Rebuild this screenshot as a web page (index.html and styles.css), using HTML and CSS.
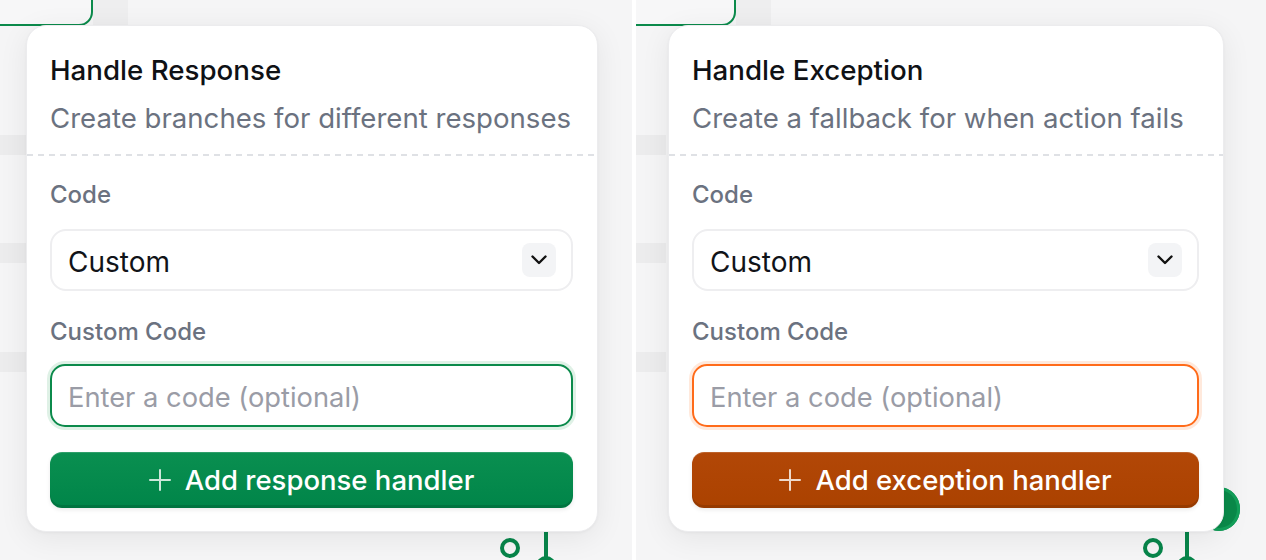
FILE: index.html
```html
<!DOCTYPE html>
<html lang="en">
<head>
<meta charset="utf-8">
<title>Handlers</title>
<link rel="stylesheet" href="styles.css">
</head>
<body>
<div class="stage">
  <section class="pane pane-left">
    <div class="band band-a"></div>
    <div class="band band-b"></div>
    <div class="band band-c"></div>
    <div class="col-shade"></div>
    <div class="node"></div>
    <svg class="connectors" width="70" height="40" viewBox="0 0 70 40">
      <circle cx="15" cy="18" r="8" fill="none" stroke="#07854a" stroke-width="4"/>
      <line x1="51" y1="0" x2="51" y2="28" stroke="#07854a" stroke-width="4"/>
      <circle cx="51" cy="36" r="8" fill="none" stroke="#07854a" stroke-width="4"/>
    </svg>
    <div class="card">
      <div class="card-head">
        <h2 class="title">Handle Response</h2>
        <p class="subtitle">Create branches for different responses</p>
      </div>
      <div class="separator"></div>
      <div class="card-body">
        <label class="label">Code</label>
        <div class="select">
          <span class="select-value">Custom</span>
          <span class="chevron">
            <svg width="16" height="10" viewBox="0 0 16 10"><polyline points="1.5,1.5 8,8 14.5,1.5" fill="none" stroke="#111" stroke-width="2.4" stroke-linecap="round" stroke-linejoin="round"/></svg>
          </span>
        </div>
        <label class="label label-gap">Custom Code</label>
        <div class="input input-green">Enter a code (optional)</div>
        <button class="btn btn-green">
          <svg class="plus" width="22" height="22" viewBox="0 0 22 22"><path d="M11 1v20M1 11h20" stroke="currentColor" stroke-width="2" stroke-linecap="round"/></svg>
          <span>Add response handler</span>
        </button>
      </div>
    </div>
  </section>
  <div class="divider"></div>
  <section class="pane pane-right">
    <div class="band band-a"></div>
    <div class="band band-b"></div>
    <div class="band band-c"></div>
    <div class="col-shade col-shade-r"></div>
    <div class="node node-r"></div>
    <div class="big-dot"></div>
    <svg class="connectors connectors-r" width="70" height="40" viewBox="0 0 70 40">
      <circle cx="15" cy="18" r="8" fill="none" stroke="#07854a" stroke-width="4"/>
      <line x1="49" y1="0" x2="49" y2="28" stroke="#07854a" stroke-width="4"/>
      <circle cx="49" cy="36" r="8" fill="none" stroke="#07854a" stroke-width="4"/>
    </svg>
    <div class="card card-r">
      <div class="card-head">
        <h2 class="title">Handle Exception</h2>
        <p class="subtitle">Create a fallback for when action fails</p>
      </div>
      <div class="separator"></div>
      <div class="card-body">
        <label class="label">Code</label>
        <div class="select">
          <span class="select-value">Custom</span>
          <span class="chevron">
            <svg width="16" height="10" viewBox="0 0 16 10"><polyline points="1.5,1.5 8,8 14.5,1.5" fill="none" stroke="#111" stroke-width="2.4" stroke-linecap="round" stroke-linejoin="round"/></svg>
          </span>
        </div>
        <label class="label label-gap">Custom Code</label>
        <div class="input input-orange">Enter a code (optional)</div>
        <button class="btn btn-orange">
          <svg class="plus" width="22" height="22" viewBox="0 0 22 22"><path d="M11 1v20M1 11h20" stroke="currentColor" stroke-width="2" stroke-linecap="round"/></svg>
          <span>Add exception handler</span>
        </button>
      </div>
    </div>
  </section>
</div>
</body>
</html>
```

FILE: styles.css
```css
* { box-sizing: border-box; }
html, body { margin: 0; padding: 0; background: #ffffff; }
body {
  font-family: Inter, "Noto Sans", "Liberation Sans", sans-serif;
  width: 1266px;
  height: 560px;
  overflow: hidden;
}
.stage {
  display: flex;
  width: 1266px;
  height: 560px;
}
.divider { width: 4px; background: #ffffff; }
.pane {
  position: relative;
  height: 560px;
  overflow: hidden;
  background: #f5f5f6;
}
.pane-left { width: 632px; padding: 25px 0 0 26px; }
.pane-right { width: 630px; padding: 25px 0 0 32px; }

.band {
  position: absolute;
  left: 0;
  width: 30px;
  height: 20px;
  background: #ececed;
}
.band-a { top: 135px; }
.band-b { top: 243px; }
.band-c { top: 352px; }
.col-shade {
  position: absolute;
  left: 93px;
  top: 0;
  width: 35px;
  height: 26px;
  background: #eeeeef;
}
.col-shade-r { left: 100px; }
.node {
  position: absolute;
  left: -40px;
  top: -60px;
  width: 133px;
  height: 86px;
  border: 2px solid #0b8a4b;
  border-radius: 14px;
  background: #f7f7f8;
}
.node-r { width: 140px; }
.connectors {
  position: absolute;
  left: 495px;
  top: 530px;
}
.connectors-r { left: 502px; }
.big-dot {
  position: absolute;
  left: 562px;
  top: 487px;
  width: 42px;
  height: 44px;
  border-radius: 50%;
  background: #0a8a4a;
  box-shadow: inset 0 0 0 3px #13a05a;
}

.card {
  position: relative;
  z-index: 1;
  width: 572px;
  height: 507px;
  background: #ffffff;
  border: 1px solid #ececee;
  border-radius: 20px;
  box-shadow: 0 6px 30px rgba(0, 0, 0, 0.07), 0 1px 3px rgba(0, 0, 0, 0.04);
  display: flex;
  flex-direction: column;
}
.card-r { width: 556px; }
.card-head {
  padding: 27px 24px 19px 23px;
  display: flex;
  flex-direction: column;
  gap: 14px;
}
.title {
  margin: 0;
  font-size: 27.7px;
  line-height: 34px;
  font-weight: 500;
  color: #0f1115;
  white-space: nowrap;
}
.subtitle {
  margin: 0;
  font-size: 27.6px;
  line-height: 34px;
  font-weight: 400;
  color: #6b7280;
  white-space: nowrap;
}
.separator {
  height: 2px;
  margin: 0;
  background: repeating-linear-gradient(90deg, #dfe1e5 0 6px, transparent 6px 11px);
}
.card-body {
  padding: 25px 24px 23px 23px;
  display: flex;
  flex-direction: column;
}
.label {
  display: block;
  font-size: 24px;
  line-height: 28px;
  font-weight: 500;
  color: #6b7280;
  margin-bottom: 20px;
}
.label-gap { margin-top: 27px; margin-bottom: 18px; }
.select {
  height: 62px;
  border: 2px solid #eeeef0;
  border-radius: 16px;
  display: flex;
  align-items: center;
  justify-content: space-between;
  padding: 0 15px 0 16px;
}
.select-value {
  font-size: 28px;
  line-height: 34px;
  padding-top: 4px;
  color: #111318;
}
.chevron {
  width: 34px;
  height: 34px;
  border-radius: 8px;
  background: #f3f4f6;
  display: flex;
  align-items: center;
  justify-content: center;
}
.input {
  height: 63px;
  border: 2px solid #0b8a4b;
  border-radius: 15px;
  display: flex;
  align-items: center;
  padding: 3px 17px 0 16px;
  font-size: 27.3px;
  color: #9a9ca6;
}
.input-green { box-shadow: 0 0 0 3px #dff1e6; }
.input-orange { border-color: #ff6b1a; box-shadow: 0 0 0 3px #ffe9dc; }
.btn {
  margin-top: 25px;
  height: 56px;
  border: none;
  border-radius: 12px;
  display: flex;
  align-items: center;
  justify-content: center;
  gap: 14px;
  font-family: inherit;
  font-size: 27.5px;
  font-weight: 500;
  color: #ffffff;
  padding: 0;
}
.btn-green {
  background: linear-gradient(#0a8f50, #008549);
  box-shadow: inset 0 -3px 0 rgba(0, 0, 0, 0.12), inset 0 1px 0 rgba(255, 255, 255, 0.15), 0 2px 4px rgba(0, 0, 0, 0.08);
}
.btn-orange {
  background: linear-gradient(#b24707, #ab4200);
  box-shadow: inset 0 -3px 0 rgba(0, 0, 0, 0.12), inset 0 1px 0 rgba(255, 255, 255, 0.15), 0 2px 4px rgba(0, 0, 0, 0.08);
}
.plus { color: rgba(255, 255, 255, 0.8); }
```
